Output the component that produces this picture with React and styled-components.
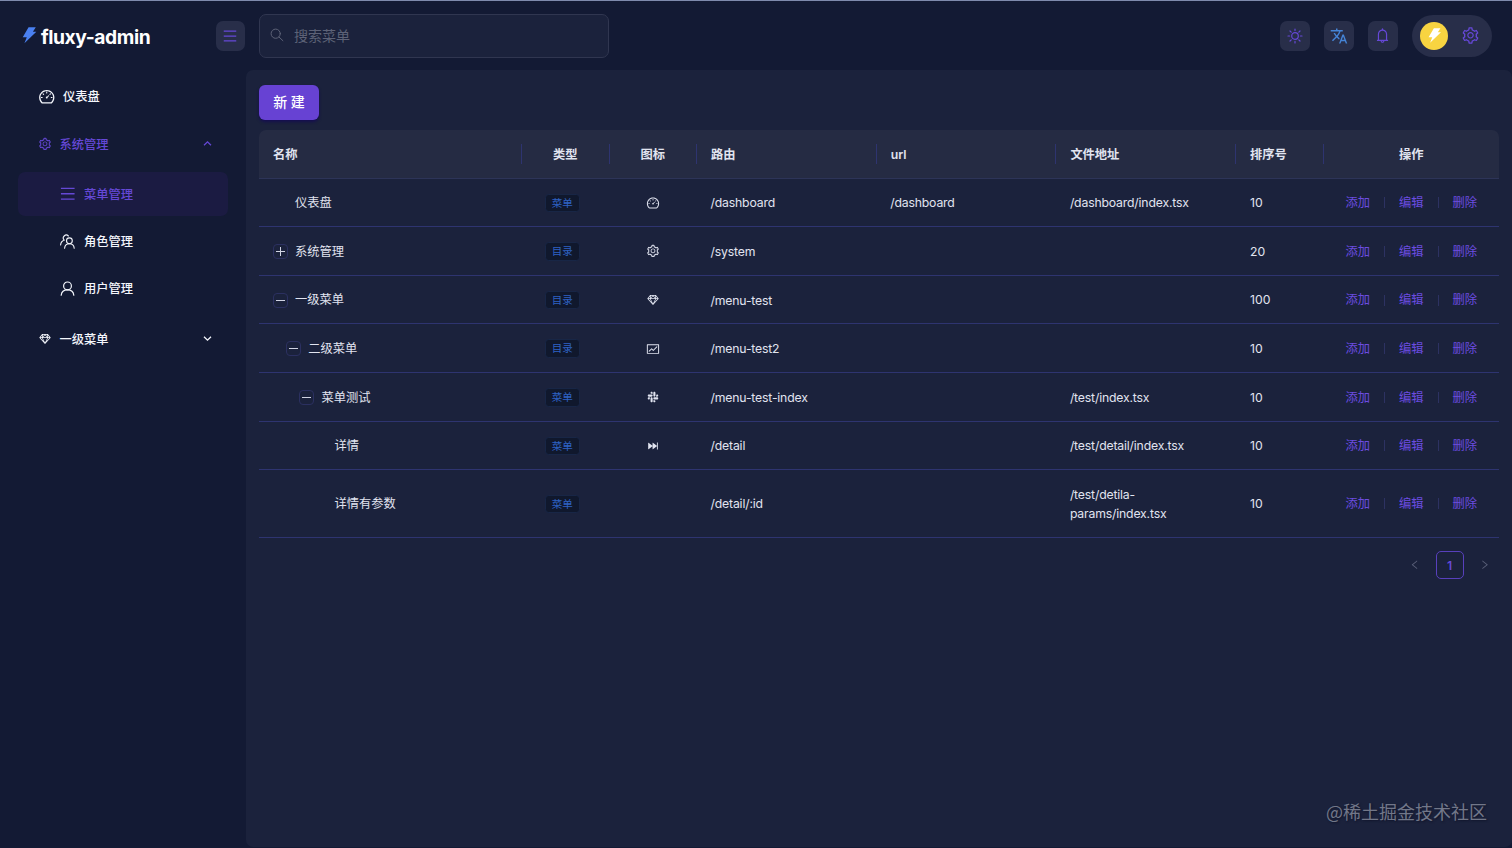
import React from "react";
import styled, { createGlobalStyle } from "styled-components";
import {
  AiOutlineBell,
  AiOutlineDashboard,
  AiOutlineFund,
  AiOutlineLeft,
  AiOutlineMenu,
  AiOutlineRight,
  AiOutlineSetting,
  AiOutlineSketch,
  AiOutlineSlack,
  AiFillFastForward,
} from "react-icons/ai";
import { MdTranslate } from "react-icons/md";

const GlobalStyle = createGlobalStyle`
  * {
    box-sizing: border-box;
  }
  body {
    margin: 0;
    background: #131a34;
    color: #e1e4f0;
    font-family: Inter, "Noto Sans CJK SC", sans-serif;
    font-size: 12.25px;
    overflow: hidden;
  }
  svg {
    display: block;
    flex: none;
  }
`;

const Bolt = ({ size, color }) => (
  <svg width={size} height={size} viewBox="0 0 24 24" fill={color}>
    <path d="M11 .5h10.5l-4.2 6.3h5L5 23.5l3.4-8.7H2.5z" />
  </svg>
);

const SunIcon = () => (
  <svg width="16" height="16" viewBox="0 0 16 16" fill="none" stroke="currentColor" strokeWidth="1.2" strokeLinecap="round">
    <circle cx="8" cy="8" r="3.3" />
    <path d="M8 1v1.6M8 13.4V15M1 8h1.6M13.4 8H15M3 3l1.2 1.2M11.8 11.8 13 13M3 13l1.2-1.2M11.8 4.2 13 3" />
  </svg>
);

const SearchIcon = () => (
  <svg width="14" height="14" viewBox="0 0 14 14" fill="none" stroke="currentColor" strokeWidth="1" strokeLinecap="round">
    <circle cx="5.7" cy="5.7" r="4.6" />
    <path d="m9.1 9.1 3.8 3.6" />
  </svg>
);

const UserIcon = () => (
  <svg width="15" height="15" viewBox="0 0 15 15" fill="none" stroke="currentColor" strokeWidth="1.2" strokeLinecap="round">
    <circle cx="7.5" cy="4.9" r="3.9" />
    <path d="M1.2 14.2C1.5 11 4 8.8 7.5 8.8s6 2.2 6.3 5.4" />
  </svg>
);

const RoleIcon = () => (
  <svg width="15" height="15" viewBox="0 0 15 15" fill="none" stroke="currentColor" strokeWidth="1.1" strokeLinecap="round">
    <circle cx="9.4" cy="6.8" r="2.9" />
    <path d="M4.6 14.2c.2-2.7 2.2-4.5 4.8-4.5s4.6 1.8 4.8 4.5" />
    <path d="M8.4 2A2.9 2.9 0 1 0 4.2 6.2M4.2 6.3C2 7 .8 8.8.6 11" />
  </svg>
);

const Arrow = ({ up }) => (
  <svg width="9" height="9" viewBox="0 0 9 9" fill="none" stroke="currentColor" strokeWidth="1.3">
    <path d={up ? "M1 6.2 4.5 2.8 8 6.2" : "M1 2.8 4.5 6.2 8 2.8"} />
  </svg>
);

const rows = [
  { name: "仪表盘", level: 0, type: "菜单", icon: AiOutlineDashboard, route: "/dashboard", url: "/dashboard", file: "/dashboard/index.tsx", order: 10 },
  { name: "系统管理", level: 0, toggle: "plus", type: "目录", icon: AiOutlineSetting, route: "/system", order: 20 },
  { name: "一级菜单", level: 0, toggle: "minus", type: "目录", icon: AiOutlineSketch, route: "/menu-test", order: 100 },
  { name: "二级菜单", level: 1, toggle: "minus", type: "目录", icon: AiOutlineFund, route: "/menu-test2", order: 10 },
  { name: "菜单测试", level: 2, toggle: "minus", type: "菜单", icon: AiOutlineSlack, route: "/menu-test-index", file: "/test/index.tsx", order: 10 },
  { name: "详情", level: 3, type: "菜单", icon: AiFillFastForward, route: "/detail", file: "/test/detail/index.tsx", order: 10 },
  { name: "详情有参数", level: 3, type: "菜单", route: "/detail/:id", file: "/test/detila-params/index.tsx", order: 10, tall: true },
];

const columns = [
  { title: "名称" },
  { title: "类型", center: true },
  { title: "图标", center: true },
  { title: "路由" },
  { title: "url" },
  { title: "文件地址" },
  { title: "排序号" },
  { title: "操作", center: true },
];

export default function App() {
  return (
    <>
      <GlobalStyle />
      <Page>
        <Header>
          <Brand>
            <Bolt size={16.5} color="#4a80f0" />
            <BrandName>fluxy-admin</BrandName>
          </Brand>
          <IconButton>
            <AiOutlineMenu size={16} />
          </IconButton>
          <Search>
            <SearchIcon />
            <span>搜索菜单</span>
          </Search>
          <Tools>
            <IconButton>
              <SunIcon />
            </IconButton>
            <IconButton $color="#4584d6">
              <MdTranslate size={18} />
            </IconButton>
            <IconButton>
              <AiOutlineBell size={17} />
            </IconButton>
            <Profile>
              <Avatar>
                <Bolt size={15} color="#fff" />
              </Avatar>
              <AiOutlineSetting size={19} />
            </Profile>
          </Tools>
        </Header>
        <Body>
          <Sidebar>
            <MenuItem $indent={19.5}>
              <AiOutlineDashboard size={17.5} />
              <span>仪表盘</span>
            </MenuItem>
            <MenuItem $indent={19.5} $active>
              <AiOutlineSetting size={14} />
              <span>系统管理</span>
              <Arrow up />
            </MenuItem>
            <SubMenu>
              <MenuItem $indent={40.5} $active $selected>
                <AiOutlineMenu size={17.5} />
                <span>菜单管理</span>
              </MenuItem>
              <MenuItem $indent={42}>
                <RoleIcon />
                <SubLabel>角色管理</SubLabel>
              </MenuItem>
              <MenuItem $indent={42}>
                <UserIcon />
                <SubLabel>用户管理</SubLabel>
              </MenuItem>
            </SubMenu>
            <MenuItem $indent={19.5}>
              <AiOutlineSketch size={14} />
              <span>一级菜单</span>
              <Arrow />
            </MenuItem>
          </Sidebar>
          <Content>
            <CreateButton>新 建</CreateButton>
            <Table>
              <HeadRow>
                {columns.map((col) => (
                  <HeadCell key={col.title} $center={col.center}>
                    {col.title}
                  </HeadCell>
                ))}
              </HeadRow>
              {rows.map((row) => (
                <Row key={row.name} $tall={row.tall}>
                  <NameCell $level={row.level}>
                    {row.toggle ? <Toggle $plus={row.toggle === "plus"} /> : <ToggleSpace />}
                    {row.name}
                  </NameCell>
                  <Cell $center>
                    <Tag>{row.type}</Tag>
                  </Cell>
                  <Cell $center>{row.icon && <row.icon size={14} />}</Cell>
                  <PathCell>{row.route}</PathCell>
                  <PathCell>{row.url}</PathCell>
                  <PathCell>{row.file}</PathCell>
                  <Cell>{row.order}</Cell>
                  <Cell $center>
                    <Action>添加</Action>
                    <Divider />
                    <Action>编辑</Action>
                    <Divider />
                    <Action>删除</Action>
                  </Cell>
                </Row>
              ))}
            </Table>
            <Pagination>
              <AiOutlineLeft size={11.5} />
              <PageNumber>1</PageNumber>
              <AiOutlineRight size={11.5} />
            </Pagination>
            <Watermark>@稀土掘金技术社区</Watermark>
          </Content>
        </Body>
      </Page>
    </>
  );
}

const Page = styled.div`
  display: flex;
  flex-direction: column;
  width: 1512px;
  height: 848px;
  padding-bottom: 1px;
  border-top: 1px solid #7f8bad;
  background: #131a34;
`;

const Header = styled.header`
  display: flex;
  align-items: center;
  height: 69px;
  padding: 0 20px 0 21px;
`;

const Brand = styled.div`
  display: flex;
  align-items: center;
  gap: 3.5px;
  width: 194.5px;
`;

const BrandName = styled.span`
  color: #fff;
  font-size: 19.25px;
  font-weight: 700;
  letter-spacing: -0.42px;
  line-height: 28px;
  padding-top: 2px;
`;

const IconButton = styled.div`
  display: flex;
  align-items: center;
  justify-content: center;
  width: 29.5px;
  height: 30px;
  border-radius: 7px;
  background: #282e49;
  color: ${(p) => p.$color || "#6548d6"};
`;

const Search = styled.div`
  display: flex;
  align-items: center;
  gap: 10px;
  width: 350px;
  height: 44px;
  margin-left: 14px;
  padding: 0 0 1px 10px;
  border: 1px solid #303650;
  border-radius: 7px;
  background: #1b223c;
  color: #5d6277;
  font-size: 14px;
`;

const Tools = styled.div`
  display: flex;
  align-items: center;
  gap: 14.4px;
  margin-left: auto;
`;

const Profile = styled.div`
  display: flex;
  align-items: center;
  gap: 13px;
  width: 80px;
  height: 42px;
  padding-left: 8px;
  border-radius: 21px;
  background: #282e49;
  color: #6548d6;
`;

const Avatar = styled.div`
  display: flex;
  align-items: center;
  justify-content: center;
  width: 28px;
  height: 28px;
  border-radius: 50%;
  background: #f8d441;
`;

const Body = styled.div`
  display: flex;
  flex: 1;
`;

const Sidebar = styled.nav`
  display: flex;
  flex-direction: column;
  gap: 3.5px;
  width: 246px;
  padding: 4.5px 18px 0;
`;

const SubMenu = styled.div`
  display: flex;
  flex-direction: column;
  gap: 3.5px;
  padding: 3px 0;
`;

const MenuItem = styled.div`
  display: flex;
  align-items: center;
  gap: 8px;
  height: 43.75px;
  padding: 0 16px 0 ${(p) => p.$indent}px;
  border-radius: 7px;
  background: ${(p) => (p.$selected ? "#1b1b42" : "transparent")};
  color: ${(p) => (p.$active ? "#6548d6" : "#f4f6fc")};
  font-weight: 500;

  span {
    flex: 1;
  }
`;

const SubLabel = styled.span`
  padding-left: 1px;
`;

const Content = styled.main`
  position: relative;
  flex: 1;
  padding: 15px 13px 0;
  border-radius: 7px;
  background: #1b223c;
`;

const CreateButton = styled.button`
  display: block;
  width: 60px;
  height: 35px;
  padding: 0 0 3px;
  border: 0;
  border-radius: 6px;
  background: #6742d3;
  box-shadow: 0 2px 3px #150e50;
  color: #fff;
  font-family: inherit;
  font-size: 14px;
  font-weight: 500;
`;

const Table = styled.div`
  margin-top: 10px;
  width: 1240px;
`;

const Row = styled.div`
  display: grid;
  grid-template-columns: 263px 87.5px 87.5px 179.7px 179.7px 179.7px 87.6px 175.3px;
  align-items: center;
  height: ${(p) => (p.$tall ? "67.5px" : "48.6px")};
  padding-top: 1px;
  border-bottom: 1px solid #2e3470;
`;

const HeadRow = styled(Row)`
  border-bottom-color: #2d3458;
  border-radius: 7px 7px 0 0;
  background: #252b43;
`;

const Cell = styled.div`
  display: flex;
  align-items: center;
  justify-content: ${(p) => (p.$center ? "center" : "flex-start")};
  padding: 0 14px;
  line-height: 19.25px;
  white-space: ${(p) => (p.$center ? "nowrap" : "normal")};
`;

const PathCell = styled(Cell)`
  padding-left: 13.5px;
  letter-spacing: -0.18px;
  line-height: 19px;
`;

const HeadCell = styled(Cell)`
  height: 20px;
  border-right: 1px solid #2e3470;
  font-weight: 600;

  &:last-child {
    border-right: 0;
  }
`;

const NameCell = styled(Cell)`
  padding-left: ${(p) => 14 + p.$level * 13.2}px;
`;

const ToggleSpace = styled.i`
  width: 15px;
  margin-right: 7px;
`;

const Toggle = styled.i`
  display: grid;
  place-items: center;
  width: 15px;
  height: 15px;
  margin-right: 7px;
  border: 1px solid #2b3060;
  border-radius: 4px;

  &::before,
  &::after {
    content: "";
    grid-area: 1 / 1;
    width: 9px;
    height: 1px;
    background: #d0d3e2;
  }
  &::after {
    width: 1px;
    height: ${(p) => (p.$plus ? "9px" : "1px")};
  }
`;

const Tag = styled.span`
  height: 18.5px;
  margin-right: 7px;
  padding: 0 6px;
  border: 1px solid #182646;
  border-radius: 3.5px;
  background: #10182d;
  color: #2e62c4;
  font-size: 10.5px;
  line-height: 17.5px;
`;

const Action = styled.a`
  color: #6c4ce0;
`;

const Divider = styled.i`
  width: 1px;
  height: 11px;
  margin: 0 14px;
  background: #2d3262;
`;

const Pagination = styled.div`
  display: flex;
  align-items: center;
  justify-content: flex-end;
  gap: 15.5px;
  margin-top: 13.5px;
  padding-right: 8.5px;
  color: #5b617a;
`;

const PageNumber = styled.span`
  width: 28px;
  height: 28px;
  border: 1px solid #5840bd;
  border-radius: 5px;
  color: #6548d6;
  font-weight: 600;
  line-height: 27px;
  text-align: center;
`;

const Watermark = styled.div`
  position: absolute;
  right: 25px;
  bottom: 22px;
  color: #727789;
  font-family: "Noto Sans CJK SC", sans-serif;
  font-size: 18px;
  line-height: 28px;
  text-shadow: 1px 1px 2px #10142a;
`;
